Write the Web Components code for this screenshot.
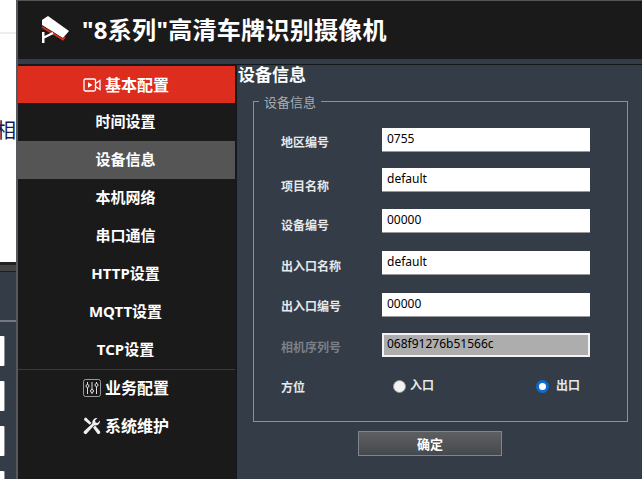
<!DOCTYPE html>
<html lang="zh">
<head>
<meta charset="utf-8">
<title>设备信息</title>
<style>
  html, body { margin: 0; height: 479px; overflow: hidden; background: #fff; }
  body { font-family: "Noto Sans", "Noto Sans CJK SC", sans-serif; }
</style>
</head>
<body>
<back-page></back-page>
<cam-dialog>
  <side-menu slot="menu">
    <menu-head active label="基本配置">
      <svg viewBox="0 0 18 16" width="18" height="16" fill="none" stroke="#fff" stroke-width="1.3"><rect x="1" y="2" width="11.5" height="12" rx="1.5"/><path d="M5 5.2 9.5 8 5 10.8Z" fill="#fff" stroke="none"/><path d="M12.5 6.5 17 3.5v9l-4.500-3"/></svg>
    </menu-head>
    <menu-item>时间设置</menu-item>
    <menu-item selected>设备信息</menu-item>
    <menu-item>本机网络</menu-item>
    <menu-item>串口通信</menu-item>
    <menu-item>HTTP设置</menu-item>
    <menu-item>MQTT设置</menu-item>
    <menu-item>TCP设置</menu-item>
    <menu-head divider label="业务配置">
      <svg viewBox="0 0 18 18" width="18" height="18" fill="none" stroke="#ddd" stroke-width="1"><rect x=".5" y=".5" width="17" height="17" rx="2" stroke="#999"/><path d="M4.500 3v12M9 3v12M13.500 3v12"/><circle cx="4.500" cy="7" r="1.500" fill="#1a1a1a"/><circle cx="9" cy="12" r="1.500" fill="#1a1a1a"/><circle cx="13.500" cy="6" r="1.500" fill="#1a1a1a"/></svg>
    </menu-head>
    <menu-head label="系统维护">
      <svg viewBox="0 0 18 18" width="18" height="18" fill="#eee"><path d="M1.500 1 3 .5l5.500 5.500-1.700 1.700L1 3Z"/><path d="M17 3.500a4.500 4.500 0 0 1-5.800 4.700L3.800 16.500a1.800 1.800 0 0 1-2.600-2.500l8.200-7.500A4.500 4.500 0 0 1 14.500 1L12 3.500l.6 2 2 .6Z"/><path d="M10 10.500l2-2 4.800 5.500a1.700 1.700 0 0 1-2.500 2.400Z"/></svg>
    </menu-head>
  </side-menu>
  <device-form slot="content"></device-form>
</cam-dialog>

<script>
class BackPage extends HTMLElement {
  constructor () {
    super()
    this.attachShadow({ mode: 'open' })
  }

  connectedCallback () {
    this.shadowRoot.innerHTML = /* html */`
      <style>
        :host { display: flex; flex-direction: column; width: 16px; height: 479px; overflow: hidden; }
        .top { height: 262px; background: #fff; box-sizing: border-box; padding-top: 32px; flex: none; }
        .rule { height: 2px; background: #eeeef2; }
        .char { margin: 81px 0 0 -4px; width: 30px; font: 20px/30px "Noto Sans CJK SC", sans-serif; color: #14204f; white-space: nowrap; }
        .band { height: 3px; background: #222; flex: none; }
        .tab { height: 6px; background: #444; border-bottom: 1px solid #1c1c1c; flex: none; }
        .low { flex: 1; background: #333c47; }
        .line { height: 2px; margin-top: 48px; background: #778; }
        .box { width: 4px; height: 30px; background: #fff; border-radius: 0 1px 1px 0; margin-bottom: 15px; box-shadow: 1px 0 0 #8a8f96; }
        .line + .box { margin-top: 14px; }
      </style>
      <div class="top"><div class="rule"></div><div class="char">相</div></div>
      <div class="band"></div>
      <div class="tab"></div>
      <div class="low">
        <div class="line"></div>
        <div class="box"></div><div class="box"></div><div class="box"></div><div class="box"></div>
      </div>
    `
  }
}

class CamDialog extends HTMLElement {
  constructor () {
    super()
    this.attachShadow({ mode: 'open' })
  }

  connectedCallback () {
    this.shadowRoot.innerHTML = /* html */`
      <style>
        :host {
          position: absolute; left: 16px; top: 0; width: 626px; height: 479px;
          display: flex; flex-direction: column; box-sizing: border-box;
          border-left: 2px solid #55595e; border-top: 1px solid #555;
          background: #333c47;
        }
        header {
          height: 58px; background: #1a1a1a; flex: none;
          display: flex; align-items: center; padding-left: 22px; gap: 11px;
        }
        h1 {
          margin: 0; color: #fff; font: 700 24px/1 "Noto Sans", "Noto Sans CJK SC", sans-serif;
          letter-spacing: .3px;
        }
        .strip { height: 5px; background: #333c47; border-bottom: 1px solid #16181b; flex: none; }
        .body { flex: 1; display: flex; min-height: 0; }
        .menu { width: 217px; flex: none; background: #1a1a1a; border-right: 2px solid #16181b; padding-top: 1px; }
        .content { flex: 1; min-width: 0; }
      </style>
      <header>
        <svg width="31" height="30" viewBox="0 0 31 30">
          <path d="M2 5 8 1 29 16 23 23 2 10Z" fill="#fff"/>
          <path d="M2 12 23 24.500l2-2.500" fill="none" stroke="#d92c1e" stroke-width="2"/>
          <path d="M2 17h2.500v4l8-4 1 2-9 4.500v4.500H2Z" fill="#fff"/>
        </svg>
        <h1>"8系列"高清车牌识别摄像机</h1>
      </header>
      <div class="strip"></div>
      <div class="body">
        <div class="menu"><slot name="menu"></slot></div>
        <div class="content"><slot name="content"></slot></div>
      </div>
    `
  }
}

class SideMenu extends HTMLElement {
  constructor () {
    super()
    this.attachShadow({ mode: 'open' })
  }

  connectedCallback () {
    this.shadowRoot.innerHTML = /* html */`
      <style>:host { display: flex; flex-direction: column; }</style>
      <slot></slot>
    `
  }
}

class MenuHead extends HTMLElement {
  constructor () {
    super()
    this.attachShadow({ mode: 'open' })
  }

  connectedCallback () {
    this.shadowRoot.innerHTML = /* html */`
      <style>
        :host {
          display: flex; align-items: center; justify-content: center; gap: 4px; height: 37px;
          box-sizing: border-box; padding-right: 1px;
          color: #fff; font: 700 16px/1 "Noto Sans", "Noto Sans CJK SC", sans-serif;
        }
        :host([active]) { background: #dc2d1e; }
        :host(:not([active])) { height: 38px; }
        :host([divider]) { border-top: 1px solid #333c47; padding-bottom: 2px; }
        ::slotted(svg) { flex: none; }
      </style>
      <slot></slot><span>${this.getAttribute('label')}</span>
    `
  }
}

class MenuItem extends HTMLElement {
  constructor () {
    super()
    this.attachShadow({ mode: 'open' })
  }

  connectedCallback () {
    this.shadowRoot.innerHTML = /* html */`
      <style>
        :host {
          display: flex; align-items: center; justify-content: center; height: 38px;
          box-sizing: border-box; padding: 0 2px 2px 0;
          color: #fff; font: 700 15px/1 "Noto Sans", "Noto Sans CJK SC", sans-serif;
        }
        :host([selected]) { background: #555; }
      </style>
      <slot></slot>
    `
  }
}

class FormRow extends HTMLElement {
  constructor () {
    super()
    this.attachShadow({ mode: 'open' })
  }

  connectedCallback () {
    const value = this.getAttribute('value')
    const off = this.hasAttribute('disabled')
    this.shadowRoot.innerHTML = /* html */`
      <style>
        :host {
          display: grid; grid-template-columns: 101px 208px; align-items: start;
          height: var(--row, 41px);
          font: 700 12px/16px "Noto Sans", "Noto Sans CJK SC", sans-serif; color: #e6e8ea;
        }
        :host([disabled]) { color: #7b8087; }
        label { padding-top: var(--shift, 6px); }
        input {
          box-sizing: border-box; width: 208px; height: 24px; margin: 0; padding: 0 0 3px 5px;
          border: 0; border-bottom: 1px solid #999; background: #fff; color: #000; outline: none;
          font: 400 12px "Noto Sans", "Noto Sans CJK SC", sans-serif;
        }
        input:disabled { background: #adadad; border: 2px solid #f2f2f2; padding-left: 3px; color: #000; }
      </style>
      <label>${this.getAttribute('label')}</label>
      <input type="text" value="${value}" ${off ? 'disabled' : ''}>
    `
  }
}

class RadioRow extends HTMLElement {
  constructor () {
    super()
    this.attachShadow({ mode: 'open' })
  }

  connectedCallback () {
    this.shadowRoot.innerHTML = /* html */`
      <style>
        :host {
          display: grid; grid-template-columns: 112px 143px auto; align-items: center; height: 24px; padding-top: 1px;
          font: 700 12px/16px "Noto Sans", "Noto Sans CJK SC", sans-serif; color: #e6e8ea;
        }
        span { padding-top: 3px; }
        label { display: flex; align-items: center; gap: 4px; }
        i { width: 13px; height: 13px; border-radius: 50%; background: #f2f2f2; box-sizing: border-box; border: 1px solid #999; }
        i.on { background: #fff; border: 3.500px solid #0f6cc8; }
        .gap { gap: 7px; }
      </style>
      <span>${this.getAttribute('label')}</span>
      <label><i></i>入口</label>
      <label class="gap"><i class="on"></i>出口</label>
    `
  }
}

class DeviceForm extends HTMLElement {
  constructor () {
    super()
    this.attachShadow({ mode: 'open' })
  }

  connectedCallback () {
    this.shadowRoot.innerHTML = /* html */`
      <style>
        :host { display: flex; flex-direction: column; padding-top: 0; color: #fff; }
        h2 { margin: 0 0 0 1px; height: 28px; font: 700 17px/20px "Noto Sans", "Noto Sans CJK SC", sans-serif; }
        fieldset {
          box-sizing: border-box; width: 375px; height: 329px; margin: 0 0 0 16px; padding: 18px 0 0 27px;
          border: 1px solid #8c9196;
        }
        legend {
          margin-left: -22px; padding: 1px 5px 0; color: #a8acb0;
          font: 400 13px/16px "Noto Sans", "Noto Sans CJK SC", sans-serif;
        }
        .actions { margin: 9px 0 0 121px; }
        button {
          width: 144px; height: 25px; padding: 0; box-sizing: border-box; border: 1px solid #7f858b;
          background: linear-gradient(#5e5f61, #45494e); color: #fff;
          font: 700 13px "Noto Sans", "Noto Sans CJK SC", sans-serif;
        }
        form-row[label="地区编号"] { --shift: 7px; --row: 40px; }
        form-row[label="项目名称"] { --shift: 11px; --row: 41px; }
        form-row[label="设备编号"] { --shift: 9px; --row: 42px; }
        form-row[label="出入口名称"] { --shift: 8px; --row: 42px; }
        form-row[label="出入口编号"] { --shift: 6px; --row: 40px; }
        form-row[label="相机序列号"] { --shift: 7px; --row: 40px; }
      </style>
      <h2>设备信息</h2>
      <fieldset>
        <legend>设备信息</legend>
        <form-row label="地区编号" value="0755"></form-row>
        <form-row label="项目名称" value="default"></form-row>
        <form-row label="设备编号" value="00000"></form-row>
        <form-row label="出入口名称" value="default"></form-row>
        <form-row label="出入口编号" value="00000"></form-row>
        <form-row label="相机序列号" value="068f91276b51566c" disabled></form-row>
        <radio-row label="方位"></radio-row>
      </fieldset>
      <div class="actions"><button type="button">确定</button></div>
    `
  }
}

customElements.define('back-page', BackPage)
customElements.define('cam-dialog', CamDialog)
customElements.define('side-menu', SideMenu)
customElements.define('menu-head', MenuHead)
customElements.define('menu-item', MenuItem)
customElements.define('form-row', FormRow)
customElements.define('radio-row', RadioRow)
customElements.define('device-form', DeviceForm)
</script>
</body>
</html>
